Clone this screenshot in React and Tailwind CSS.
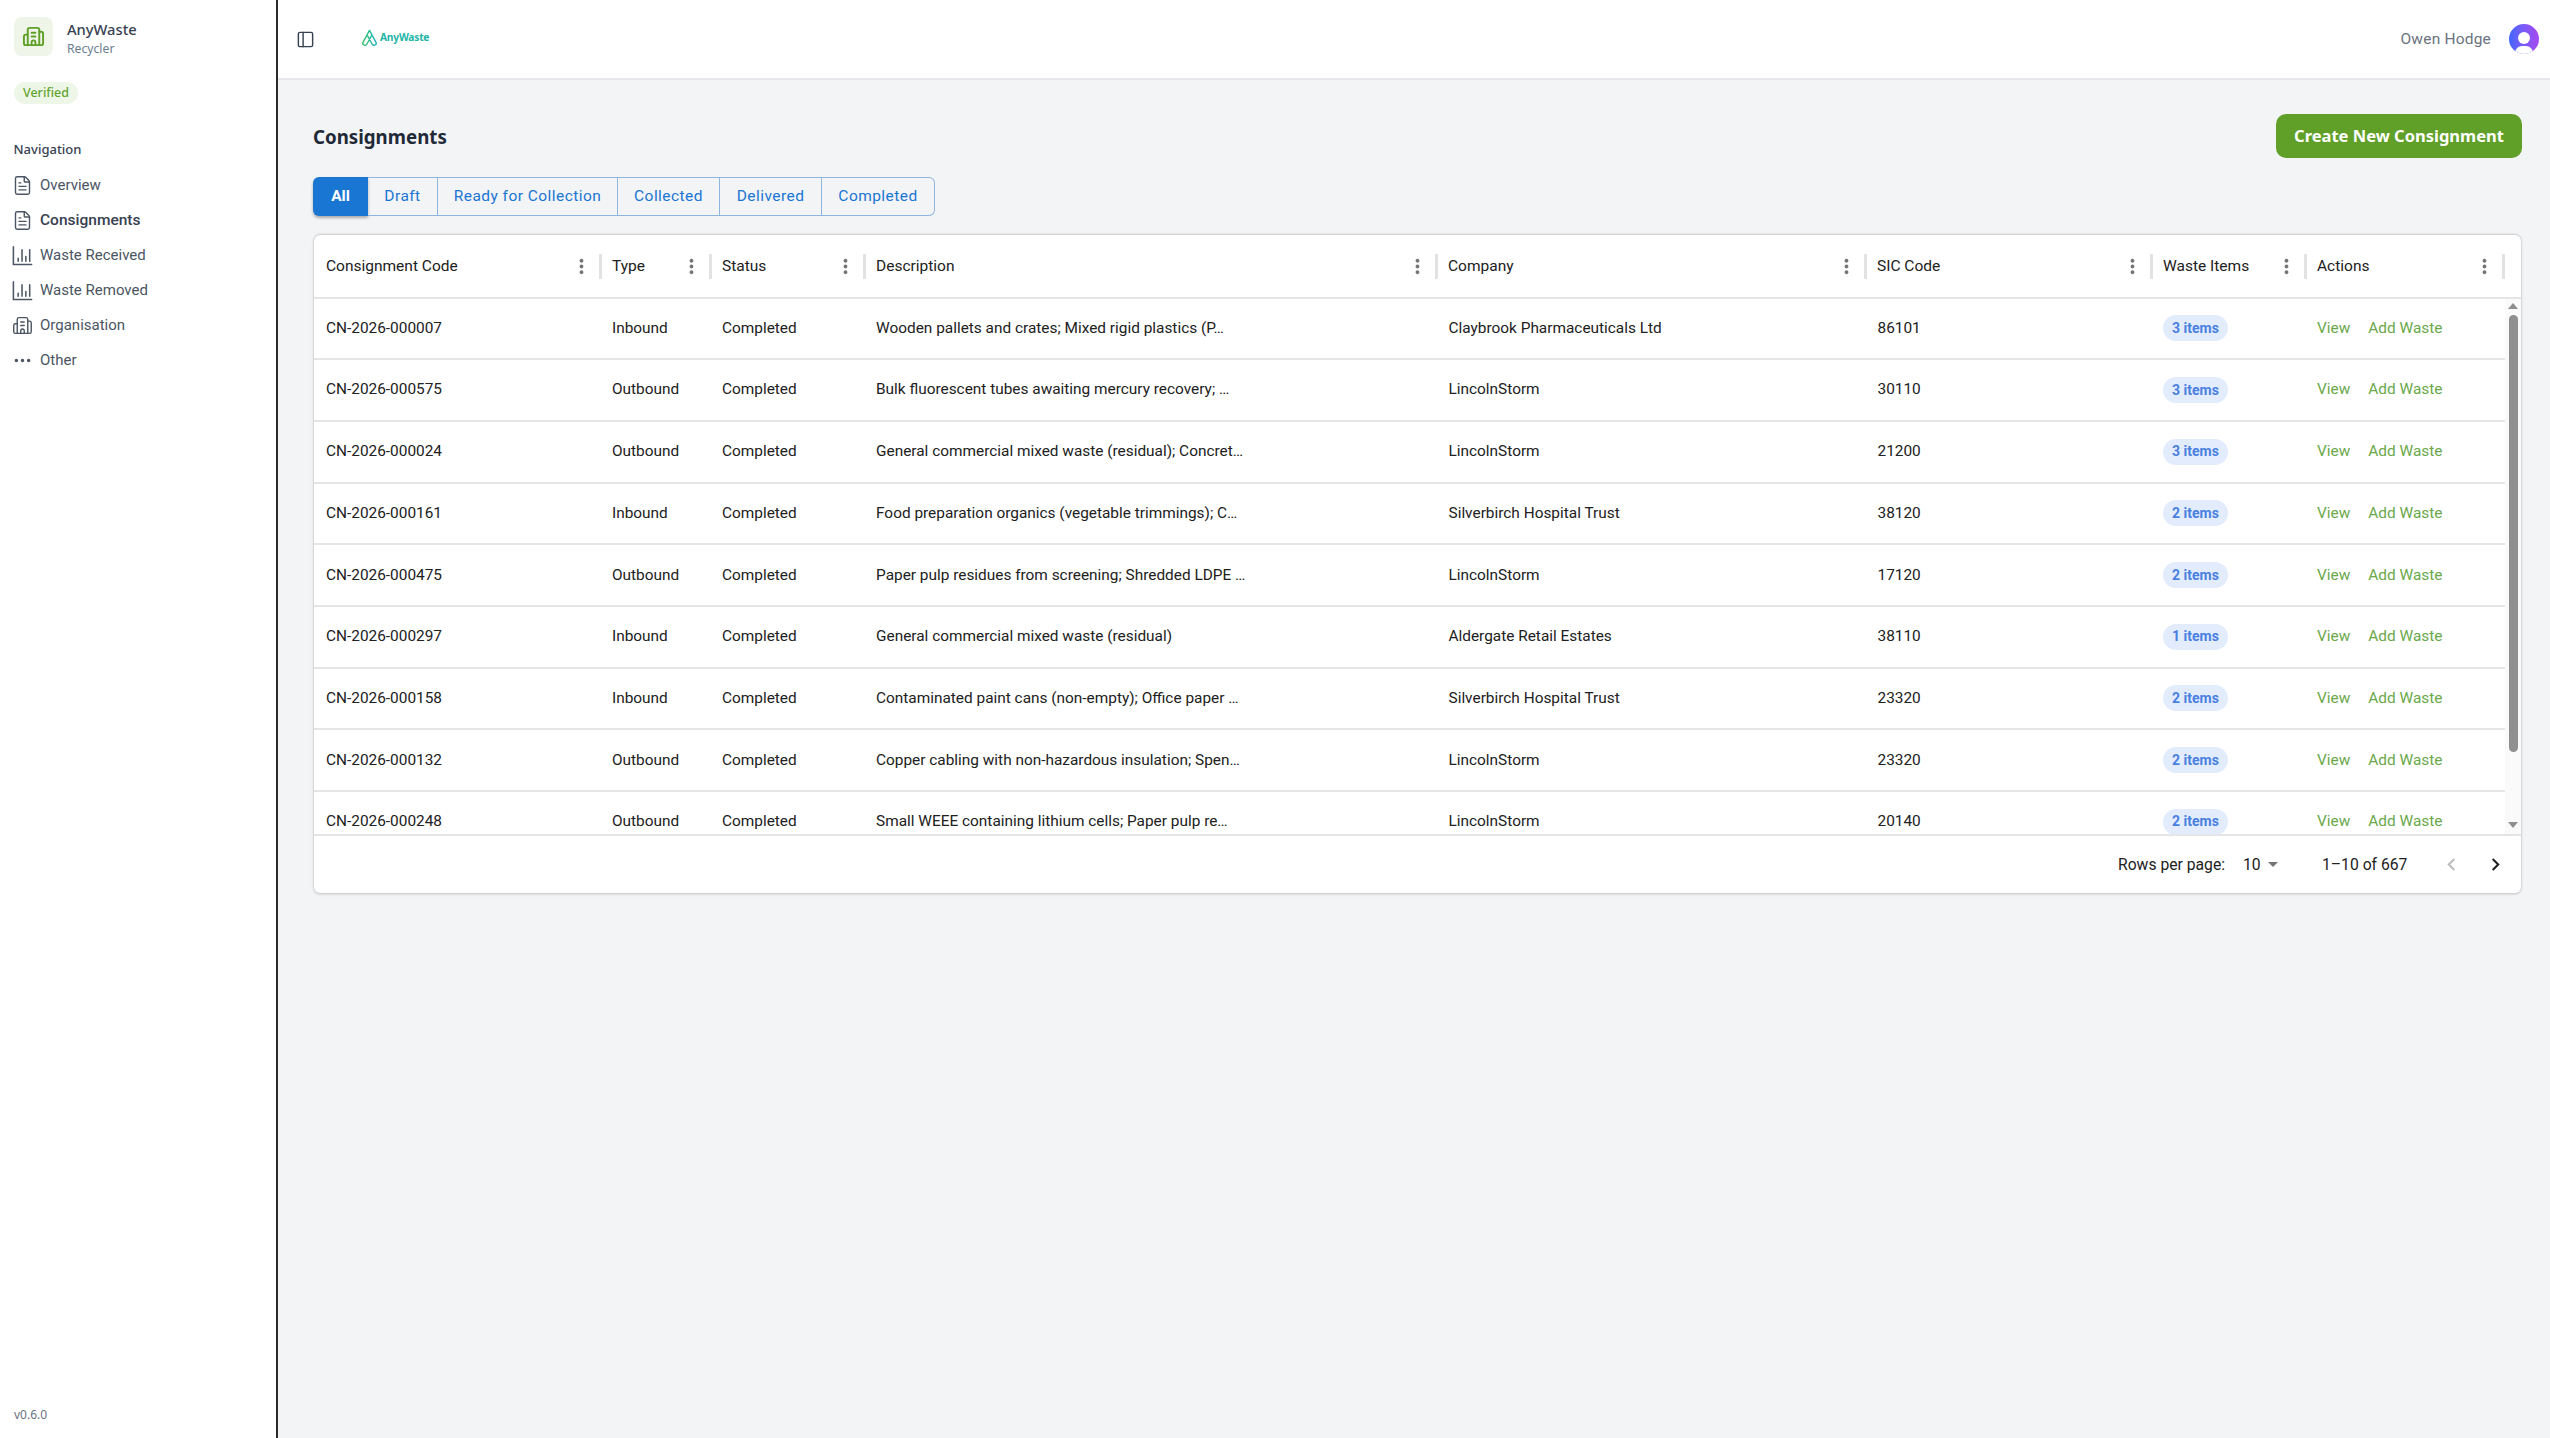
import React from "react";
import { FileText, Building2, Ellipsis, PanelLeft } from "lucide-react";

const rows = [
  ["CN-2026-000007", "Inbound", "Wooden pallets and crates; Mixed rigid plastics (P…", "Claybrook Pharmaceuticals Ltd", "86101", "3 items"],
  ["CN-2026-000575", "Outbound", "Bulk fluorescent tubes awaiting mercury recovery; …", "LincolnStorm", "30110", "3 items"],
  ["CN-2026-000024", "Outbound", "General commercial mixed waste (residual); Concret…", "LincolnStorm", "21200", "3 items"],
  ["CN-2026-000161", "Inbound", "Food preparation organics (vegetable trimmings); C…", "Silverbirch Hospital Trust", "38120", "2 items"],
  ["CN-2026-000475", "Outbound", "Paper pulp residues from screening; Shredded LDPE …", "LincolnStorm", "17120", "2 items"],
  ["CN-2026-000297", "Inbound", "General commercial mixed waste (residual)", "Aldergate Retail Estates", "38110", "1 items"],
  ["CN-2026-000158", "Inbound", "Contaminated paint cans (non-empty); Office paper …", "Silverbirch Hospital Trust", "23320", "2 items"],
  ["CN-2026-000132", "Outbound", "Copper cabling with non-hazardous insulation; Spen…", "LincolnStorm", "23320", "2 items"],
  ["CN-2026-000248", "Outbound", "Small WEEE containing lithium cells; Paper pulp re…", "LincolnStorm", "20140", "2 items"],
];
const columns = ["Consignment Code", "Type", "Status", "Description", "Company", "SIC Code", "Waste Items", "Actions"];
const tabs = ["Draft", "Ready for Collection", "Collected", "Delivered", "Completed"];
const tabWidths = ["w-[70px]", "w-[180px]", "w-[102px]", "w-[102px]", "w-[112px]"];

function ChartIcon() {
  return (
    <svg viewBox="0 0 24 24" className="w-[23px] h-[23px] shrink-0" fill="none" stroke="#4b5563" strokeWidth="1.6" strokeLinecap="round">
      <path d="M2.5 3v18.5h19" />
      <path d="M7.5 18v-3M11.5 18V6M15.5 18v-5M19.5 18V6" />
    </svg>
  );
}

function NavItem({ icon, label, active }) {
  return (
    <div className="h-[35px] flex items-center gap-[6px] pl-[11px]">
      <div className="w-[23px] h-[23px] flex items-center justify-center shrink-0">{icon}</div>
      <span className={active ? "text-[15.5px] text-[#374151] font-medium" : "text-[15px] text-[#4b5563]"}>{label}</span>
    </div>
  );
}

function MoreVert() {
  return (
    <svg viewBox="0 0 24 24" className="w-[23px] h-[23px] shrink-0" fill="#757575">
      <path d="M12 8c1.1 0 2-.9 2-2s-.9-2-2-2-2 .9-2 2 .9 2 2 2zm0 2c-1.1 0-2 .9-2 2s.9 2 2 2 2-.9 2-2-.9-2-2-2zm0 6c-1.1 0-2 .9-2 2s.9 2 2 2 2-.9 2-2-.9-2-2-2z" />
    </svg>
  );
}

const grid = "grid grid-cols-[288px_110px_154px_572px_429px_286px_154px_198px]";

export default function App() {
  return (
    <div className="w-[2550px] h-[1438px] flex bg-[#f3f4f6] overflow-hidden font-['Roboto',sans-serif] text-[#212121]">
      <aside className="w-[278px] shrink-0 h-full bg-white border-r-2 border-[#2b2b2b] flex flex-col">
        <div className="flex items-start gap-[14px] pl-[14px] pt-[17px]">
          <div className="w-[39px] h-[39px] rounded-[8px] bg-[#eff6e9] flex items-center justify-center">
            <Building2 className="w-[23px] h-[23px] text-[#60a029]" strokeWidth={2} />
          </div>
          <div className="flex flex-col mt-[1.5px] font-['Noto_Sans',sans-serif]">
            <span className="text-[14.7px] leading-[20px] font-medium text-[#374151]">AnyWaste</span>
            <span className="text-[12.2px] leading-[20px] text-[#6b7d8f]">Recycler</span>
          </div>
        </div>
        <div className="mt-[23.5px] ml-[14px] self-start h-[22px] px-[9px] rounded-full bg-[#eef6e8] text-[#62a52e] font-['Noto_Sans',sans-serif] font-medium text-[12.5px] flex items-center">Verified</div>
        <div className="mt-[33px] ml-[13.5px] font-['Noto_Sans',sans-serif] text-[13px] font-medium text-[#374151] leading-[24px]">Navigation</div>
        <nav className="mt-[7px] flex flex-col">
          <NavItem label="Overview" icon={<FileText className="w-[21px] h-[21px] text-[#4b5563]" strokeWidth={1.6} />} />
          <NavItem active label="Consignments" icon={<FileText className="w-[21px] h-[21px] text-[#4b5563]" strokeWidth={1.6} />} />
          <NavItem label="Waste Received" icon={<ChartIcon />} />
          <NavItem label="Waste Removed" icon={<ChartIcon />} />
          <NavItem label="Organisation" icon={<Building2 className="w-[21px] h-[21px] text-[#4b5563]" strokeWidth={1.6} />} />
          <NavItem label="Other" icon={<Ellipsis className="w-[21px] h-[21px] text-[#4b5563]" strokeWidth={2} />} />
        </nav>
        <div className="mt-auto mb-[14px] ml-[14px] font-['Noto_Sans',sans-serif] text-[12px] text-[#6b7280]">v0.6.0</div>
      </aside>

      <div className="flex-1 flex flex-col min-w-0">
        <header className="h-[80px] shrink-0 bg-white border-b-2 border-[#e5e7eb] flex items-center pl-[18px] pr-[11px]">
          <PanelLeft className="w-[19px] h-[19px] text-[#374151]" strokeWidth={1.8} />
          <div className="ml-[46px] flex items-center gap-[2px] -mt-[3px]">
            <svg viewBox="0 0 24 24" className="w-[17px] h-[17px]" fill="none" strokeWidth="2" strokeLinejoin="round" strokeLinecap="round">
              <defs>
                <linearGradient id="awLogo" x1="0" y1="0" x2="1" y2="0">
                  <stop offset="0" stopColor="#3cc16b" />
                  <stop offset="1" stopColor="#1fb5bd" />
                </linearGradient>
              </defs>
              <path d="M12 2 3 18.5a3 3 0 0 0 5.2 3L14.5 10M12 2l9 16.5a3 3 0 0 1-5.2 3L9.5 10" stroke="url(#awLogo)" />
            </svg>
            <span className="font-['Noto_Sans',sans-serif] font-bold text-[10.2px] tracking-[-0.2px] text-[#22b5a6]">AnyWaste</span>
          </div>
          <span className="ml-auto mt-[2px] text-[15.5px] text-[#6b7280] tracking-[0.2px]">Owen Hodge</span>
          <div className="ml-[18px] -mt-[1px] w-[30px] h-[30px] rounded-full bg-gradient-to-r from-[#3f66ff] to-[#a548f0] overflow-hidden relative flex justify-center">
            <div className="w-[12px] h-[12px] rounded-full bg-white mt-[8px] shrink-0"></div>
            <div className="absolute left-[6px] top-[22px] w-[18px] h-[14px] rounded-full bg-white"></div>
          </div>
        </header>

        <main className="flex-1 min-h-0 pl-[35px] pr-[28px] flex flex-col">
          <div className="h-[44px] mt-[34px] flex items-center justify-between">
            <h1 className="mt-[2px] font-['Noto_Sans',sans-serif] font-bold text-[18.7px] text-[#1f2937]">Consignments</h1>
            <button className="w-[246px] h-[44px] pt-[1px] rounded-[10px] bg-[#60a029] text-white font-['Noto_Sans',sans-serif] font-bold text-[16.5px]">Create New Consignment</button>
          </div>
          <div className="mt-[19px] h-[39px] flex self-start">
            <div className="w-[55px] h-full bg-[#1976d2] text-white rounded-l-[6px] shadow-[0_2px_3px_rgba(0,0,0,0.3)] flex items-center justify-center font-bold text-[15.5px]">All</div>
            <div className="flex border border-l-0 border-[#8fb6de] rounded-r-[6px] h-full">
              {tabs.map((t, i) => (
                <div key={t} className={`${tabWidths[i]} ${i < tabs.length - 1 ? "border-r border-[#8fb6de]" : ""} h-full flex items-center justify-center text-[#1976d2] text-[15.5px] tracking-[0.45px]`}>{t}</div>
              ))}
            </div>
          </div>

          <section className="mt-[19px] ml-[1px] w-[2207px] h-[658px] bg-white rounded-[6px] shadow-[0_-1px_2px_rgba(0,0,0,0.14),0_1px_3px_rgba(0,0,0,0.22)] flex flex-col overflow-hidden">
            <div className={`${grid} h-[63.5px] pt-[1px] shrink-0 border-b-2 border-[#e5e5e5]`}>
              {columns.map((c, i) => (
                <div key={c} className={`flex items-center ${i === 0 ? "pl-[12px]" : "pl-[10px]"}`}>
                  <span className="text-[15.5px] flex-1 truncate">{c}</span>
                  <MoreVert />
                  <div className="ml-[6px] w-[3px] h-[25px] bg-[#e2e2e2] shrink-0"></div>
                </div>
              ))}
            </div>
            <div className="flex-1 min-h-0 flex">
              <div className="w-[2191px] overflow-hidden">
                {rows.map((r) => (
                  <div key={r[0]} className={`${grid} h-[61.7px] border-b-2 border-[#e5e5e5] items-center text-[15.4px]`}>
                    <div className="pl-[12px]">{r[0]}</div>
                    <div className="pl-[10px]">{r[1]}</div>
                    <div className="pl-[10px]">Completed</div>
                    <div className="pl-[10px] whitespace-nowrap">{r[2]}</div>
                    <div className="pl-[10.5px]">{r[3]}</div>
                    <div className="pl-[10.5px]">{r[4]}</div>
                    <div className="pl-[10px]">
                      <span className="inline-flex items-center h-[26px] px-[9px] rounded-full bg-[#e2ecfd] text-[#4a80e0] font-bold text-[14px]">{r[5]}</span>
                    </div>
                    <div className="pl-[10px] flex gap-[18px] text-[#6aa84a]">
                      <span>View</span>
                      <span>Add Waste</span>
                    </div>
                  </div>
                ))}
              </div>
              <div className="w-[16px] shrink-0 bg-[#fafafa] flex flex-col items-center pt-[4.5px] pb-[6px]">
                <div className="w-0 h-0 border-x-[5px] border-x-transparent border-b-[6px] border-b-[#8f8f8f]"></div>
                <div className="mt-[6px] w-[9px] h-[437px] rounded-full bg-[#8f8f8f]"></div>
                <div className="mt-auto w-0 h-0 border-x-[5px] border-x-transparent border-t-[6px] border-t-[#8f8f8f]"></div>
              </div>
            </div>
            <div className="h-[59px] shrink-0 border-t-2 border-[#e5e5e5] flex items-center text-[15.7px] pl-[1804px]">
              <span className="w-[125px]">Rows per page:</span>
              <span className="w-[25px]">10</span>
              <div className="w-0 h-0 border-x-[5px] border-x-transparent border-t-[5px] border-t-[#757575]"></div>
              <span className="ml-[44px] w-[110px]">1–10 of 667</span>
              <svg viewBox="0 0 24 24" className="w-[25px] h-[25px] ml-[7px]" fill="#bdbdbd"><path d="M15.41 7.41 14 6l-6 6 6 6 1.41-1.41L10.83 12z" /></svg>
              <svg viewBox="0 0 24 24" className="w-[25px] h-[25px] ml-[18.5px]" fill="#212121"><path d="M10 6 8.59 7.41 13.17 12l-4.58 4.59L10 18l6-6z" /></svg>
            </div>
          </section>
        </main>
      </div>
    </div>
  );
}
